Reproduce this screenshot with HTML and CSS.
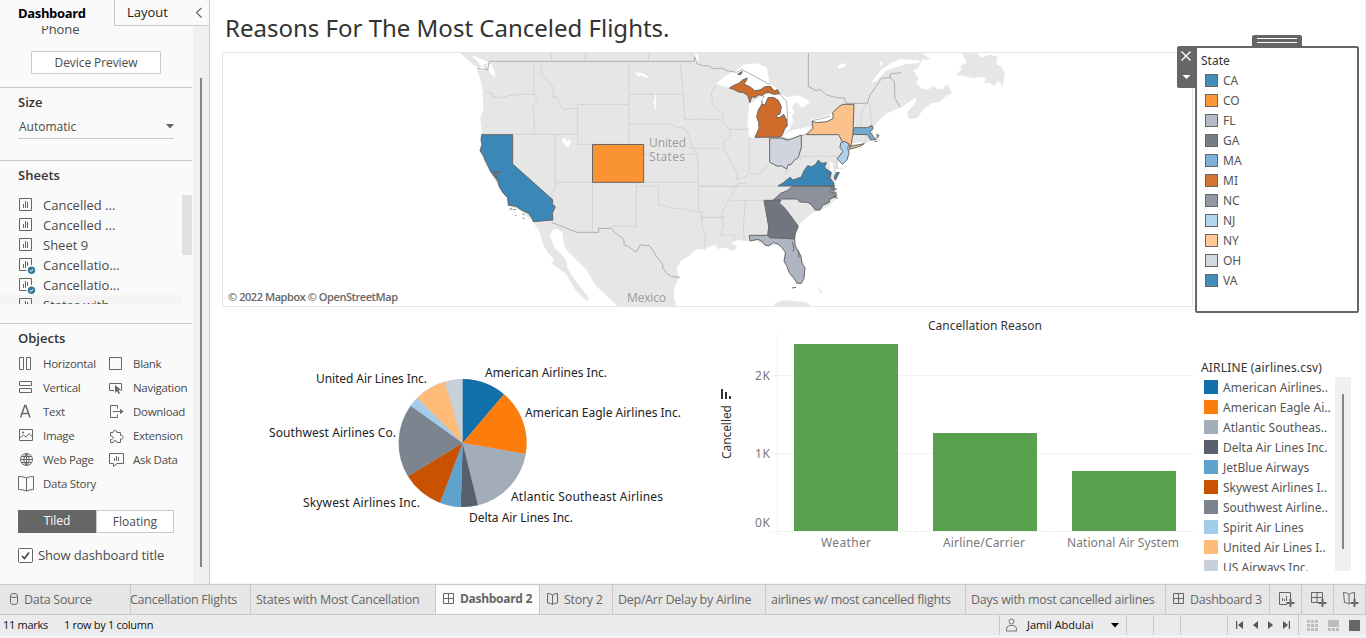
FILE: index.html
```html
<!DOCTYPE html>
<html lang="en">
<head>
<meta charset="utf-8">
<title>Reasons For The Most Canceled Flights</title>
<link rel="stylesheet" href="styles.css">
</head>
<body>
<svg width="0" height="0" class="defs">
  <symbol id="sheet" viewBox="0 0 17 17"><path d="M.5 1.5h12v12H.5z M4.500 7v4 M6.500 4v7 M8.500 5v6" fill="none" stroke="#666"/></symbol>
  <symbol id="sheetUsed" viewBox="0 0 17 17"><path d="M7.500 13.500H.5v-12h12V8 M4.500 7v4 M6.500 4v7 M8.500 5v4" fill="none" stroke="#666"/><circle cx="12.500" cy="13.300" r="3.700" fill="#357a9c"/><path d="M10.800 13.300l1.300 1.200 2-2.400" fill="none" stroke="#fff"/></symbol>
  <symbol id="dash" viewBox="0 0 12 12"><path d="M.5 .5h10v10H.5z M5.500 .5v10 M.5 5.500h10" fill="none" stroke="#666"/></symbol>
  <symbol id="book" viewBox="0 0 12 12"><path d="M.5 .5q3 0 5 1.500 2-1.500 5-1.500v9.500q-3 0-5 1.500-2-1.500-5-1.500z M5.500 2v9.500" fill="none" stroke="#666"/></symbol>
</svg>
<div class="app">
  <div class="workspace">
    <aside class="sidebar">
      <div class="panes"><div class="pane active">Dashboard</div><div class="pane">Layout<svg width="8" height="12"><path d="M6.500 1L1.500 5.500l5 5" fill="none" stroke="#666" stroke-width="1.200"/></svg></div></div>
      <div class="scroller">
        <div class="options">
          <section class="device"><div class="phone">Phone</div><button class="preview">Device Preview</button></section>
          <section class="size"><h2>Size</h2><div class="select"><span>Automatic</span><svg width="8" height="5"><path d="M0 0h8L4 4.500z" fill="#666"/></svg></div></section>
          <section class="sheets"><h2>Sheets</h2>
            <div class="sheetlist">
              <ul>
                <li><svg><use href="#sheet"/></svg>Cancelled ...</li>
                <li><svg><use href="#sheet"/></svg>Cancelled ...</li>
                <li><svg><use href="#sheet"/></svg>Sheet 9</li>
                <li><svg><use href="#sheetUsed"/></svg>Cancellatio...</li>
                <li><svg><use href="#sheetUsed"/></svg>Cancellatio...</li>
                <li class="hover"><svg><use href="#sheetUsed"/></svg>States with ...</li>
              </ul>
              <i class="listthumb"></i>
            </div>
          </section>
          <section class="objects"><h2>Objects</h2>
            <div class="objgrid">
              <span><svg><path d="M1.500 2.500h4v12h-4z M8.500 2.500h4v12h-4z"/></svg>Horizontal</span>
              <span><svg><path d="M1.500 2.500h12v12h-12z"/></svg>Blank</span>
              <span><svg><path d="M1.500 2.500h12v4h-12z M1.500 9.500h12v4h-12z"/></svg>Vertical</span>
              <span><svg><path d="M6 11.500H1.500v-7h12v7h-1"/><path d="M7 6l6 5-2.500.3 1.500 3-1.500.7-1.400-3L7 14z" class="solid"/></svg>Navigation</span>
              <span><svg><path d="M2.500 14.500L6.800 2.500h1L12 14.500 M4 10.500h7" stroke-width="1.500"/></svg>Text</span>
              <span><svg><path d="M9.500 5.500v-3h-7v12h7v-3 M5 8.500h9"/><path d="M12 5.800l3.500 2.700-3.500 2.700z" class="solid"/></svg>Download</span>
              <span><svg><path d="M1.500 2.500h13v11h-13z M1.500 11l4-3 2.500 2 3-3.500 3.500 3.500"/><circle cx="5" cy="5.500" r="1" class="solid"/></svg>Image</span>
              <span><svg><path d="M2.500 5.500h2.500a2 2 0 1 1 4 0h3.500v3a1.900 1.900 0 1 1 0 3.500v3.500H9q0-2-1.700-2t-1.700 2H2.500v-3a1.900 1.900 0 1 0 0-3.500z"/></svg>Extension</span>
              <span><svg><circle cx="8.500" cy="8.500" r="6"/><path d="M2.500 8.500h12 M8.500 2.500v12 M3.500 5.500h10 M3.500 11.500h10 M8.500 2.500q-5.500 6 0 12 M8.500 2.500q5.500 6 0 12"/></svg>Web Page</span>
              <span><svg><path d="M1.500 2.500h14v10H9l-3.500 3v-3h-4z M6.500 7v3 M8.500 5v5 M10.500 6v4"/></svg>Ask Data</span>
              <span><svg><path d="M.5 1.500q5 0 8 1.500 3-1.500 7-1.500v13q-4 0-7 1.500-3-1.500-8-1.500z M8.500 3v13"/></svg>Data Story</span>
            </div>
            <div class="toggle"><b>Tiled</b><span>Floating</span></div>
            <div class="check"><svg width="15" height="15"><rect x=".5" y=".5" width="14" height="14" rx="1" fill="#fff" stroke="#666"/><path d="M4 8l2.500 2.500L11 4.500" fill="none" stroke="#444" stroke-width="1.700"/></svg>Show dashboard title</div>
          </section>
        </div>
        <div class="gutter"><i></i></div>
      </div>
    </aside>

    <main class="canvas">
      <div class="views">
        <h1>Reasons For The Most Canceled Flights.</h1>
        <svg class="map" viewBox="222 52 971 255" width="971" height="255">
          <g transform="translate(460 50) scale(.33333)">
            <path class="land" d="M-5 8L25 5 740 0 740 600 710 596 690 615 660 635 650 655 657 683 644 710 641 735 650 775 480 775 445 742 405 705 380 660 350 630 325 605 312 585 308 550 293 536 275 540 270 557 285 595 312 620 320 635 322 655 345 690 388 745 380 753 350 725 338 705 318 672 275 640 282 630 262 607 248 580 240 550 220 515 180 480 145 465 140 440 110 400 90 365 70 330 60 300 66 250 61 205 70 175 68 125 62 90 50 57 75 62 68 45 88 38 50 20z"/>
            <path class="land" d="M-5 5L30 12 65 47 58 55 40 45z"/>
            <g fill="#fff"><path d="M80 45l14 -3 12 28 -2 12-14-14z M305 268l10-5 5 10 12-5-4 22-6 2-12-12z M522 62l12 8 14-2 20 15-8 1-18-8-8 4z M585 125l4 14-2 38-5 2 2-18-9-5 10-3z M705 12l28 8-6 20-20-7z"/></g>
          </g>
          <g transform="translate(700 50) scale(.33333)">
            <path class="land" d="M-5 0H655L692 28 665 30 655 55 640 60 655 85 650 98 662 115 682 120 700 108 712 116 730 118 735 107 745 105 756 130 735 140 720 155 695 160 670 177 655 200 640 207 628 206 622 198 625 182 645 160 650 140 605 172 560 190 530 218 517 240 524 262 538 258 538 273 520 270 490 282 450 296 447 315 425 345 408 358 410 385 401 395 415 440 385 468 357 483 340 486 298 522 290 545 287 590 315 650 312 680 300 700 270 680 253 635 252 600 235 585 198 588 170 572 145 574 110 570 92 580 112 590 100 603 75 592 55 597 45 585 20 593-15 598z"/>
            <path class="land" d="M785 10H832L845 22 870 14 893 20 888 42 903 50 915 70 912 88 908 110 895 92 880 108 870 98 852 100 858 84 838 80 820 85 802 80 768 75 785 58 780 50 800 37z M222 763l20-10 15-3 40 5 25 3 12 12H222z M350 664l10 2 M354 705l14 27-8-4z M600 100l30 9-10 5-25-7z"/>
            <g fill="#fff">
              <path d="M48 102L75 78 108 62 128 44 170 40 200 52 209 101 235 116 234 131 170 123 151 130 128 116 140 90 110 99 89 114z"/>
              <path d="M148 160L165 151 200 132 236 130 262 142 292 136 315 145 330 157 306 173 291 155 276 168 282 185 276 200 280 212 268 239 240 262 235 205 205 154 175 195 177 235 165 263 148 262 142 225z"/>
              <path d="M240 262L278 240 335 229 315 252 272 270 246 271z M334 208L365 202 398 190 396 205 380 215 345 218z"/>
              <path d="M512 100L545 58 575 38 600 28 657 30 660 39 620 42 560 60 530 92z M430 325l5 2-8 21-2 30-7-12-5-26 5-18z M388 335l10 5 3 35-10-8z M448 283l35-8 8 7z M415 47l12-7 13 2-8 10-16 4z M540 35l10 4-9 12z"/>
            </g>
          </g>
          <g class="borders" transform="translate(460 50) scale(.33333)">
            <path class="national" d="M52 55L83 60 88 34H703L704 20 712 42 730 48 745 47 760 56 785 54 800 62 830 67 M275 517L350 547H416V535H454L465 548 491 566 493 585 510 592 528 606 533 600 540 585 568 587 578 600 590 620 607 641 609 655 620 670 635 680 660 682"/>
            <path d="M222 35V130 M74 126L95 130 97 142 108 140 124 144 150 136 183 133H225 M225 133L232 148 217 175 223 200V253 M64 253H353 M353 163V283H397 M353 163H507V283H397 M244 35V72L262 92 283 112 277 142 290 140 300 165 312 180 325 175 352 177 M507 35V163 M507 133H670 M660 35L665 80 670 134 674 208 M507 222H630L645 230 675 235 684 250 694 280 M286 253V397 M286 420H276V447 M286 397V420 M286 397H715V398 M397 398V548 M552 313H566 M680 313H705 M715 335V470L720 486 M529 397V529H454 M529 409H595V463L610 466 640 476 665 474 690 482 726 486 M715 409H830 M674 208H780 M688 295H783 M726 486V530L738 555 733 588 M726 502H793 M694 280L710 312 714 340 M275 8V34 M376 8V34 M565 8V34"/>
          </g>
          <g class="borders" transform="translate(700 50) scale(.33333)">
            <path class="national" d="M112 67L125 58 210 104 M237 130L260 155 263 205 254 244 M246 262L272 270 330 248 M336 212L365 206 390 198 M325 8V110L350 122 360 118 380 135 410 143 433 144 439 160H502 M502 160L510 135 545 85 570 82 583 95 585 145 600 170 M568 86L572 71 605 68"/>
            <path d="M45 108L34 130 38 165 70 190 65 210 92 245 88 262 70 275 73 298 100 350 112 370 110 390 130 383 148 370 165 373 187 365 200 345 208 340 M82 238H148 M148 262V365 M-5 409H235 M140 400L112 400 98 430 65 490 72 530 60 555H103V575 M92 451H192 M136 451L130 530 132 570 M0 502H73 M302 319H412 M302 319L300 335 M262 355L255 375 M483 230L480 200 500 160 M510 160L515 225 M410 319V355H428 M497 255V278"/>
          </g>
          <g class="states" transform="translate(460 50) scale(.33333)">
            <path fill="#3b88b8" d="M65 254H158V342L278 449 277 462 286 470 277 490 279 510 220 515 215 503 205 490 182 479 168 469 145 466 143 443 130 430 118 411 114 395 105 382 92 365 80 340 75 330 71 318 60 302 66 284 63 270z"/>
            <path d="M94 365l29 1-16 4 8 14-10-7-3-10" fill="none"/><path d="M149 477h8M160 479h7M188 492l5 2M166 496h3M188 503l5 4"/>
            <path fill="#fa9334" d="M397.500 283.500H551V397H397.500z"/>
          </g>
          <g class="states" transform="translate(700 50) scale(.33333)">
            <path fill="#cf6c2c" d="M88 114L102 106 115 101 128 90 142 84 136 97 131 101 140 106 151 111 164 122 180 120 195 110 212 109 218 118 225 123 232 118 239 131 220 133 207 127 195 129 188 136 175 135 165 143 155 140 150 158 143 136 130 128 116 126 100 118z M113 73l14-9-4 9z M165 262L177 235 176 217 170 201 175 180 186 162 195 165 204 143 220 142 235 151 244 170 240 192 230 195 231 203 240 202 251 193 260 210 262 228 253 236 248 252 242 261z"/>
            <path d="M193 139l-5 4M186 151v10"/>
            <path fill="#cfd4df" d="M209 264H242L262 270 280 265 304 255V292L295 322 282 332 272 345 265 343 260 357 245 348 230 348 209 336z"/>
            <path fill="#3786b6" d="M234 408L250 398 270 382 279 390 304 381 312 362 323 347 335 350 348 342 355 330 365 340 379 338 374 350 378 357 394 367 390 385 402 399V408z M403 381l6-13 9-1-12 24z"/>
            <path fill="#8c919c" d="M219 451L242 430 262 422 278 409H403L400 420 388 425 404 429 409 438 389 448 388 457 368 466 360 480 346 480 335 465 323 457 299 456 292 447 244 447z"/>
            <path fill="#70757f" d="M192 451H243L238 459 255 475 268 492 285 515 295 529 286 550 283 567 209 563 203 555 206 530z"/>
            <path fill="#b0b5c3" d="M148 556H204L209 563 283 567 286 588 303 619 306 640 315 654 312 685 304 700H291L281 683 268 668 260 647 252 633 257 608 245 592 235 583 220 577 206 588 195 585 187 575 174 568 150 573z"/>
            <path fill="#73acd3" d="M463 233H503L510 229 516 227 519 236 510 245 519 259 528 268 512 270 503 254 458 253z M532 274h-9M529 253l8 3-6 8"/>
            <path fill="#fbc28c" d="M320 254L339 235 336 214 350 218 381 215 400 205 398 188 416 170 429 163H462L459 252 452 292 443 281 428 278 416 254z M448 290L493 281 480 289 449 298z"/>
            <path fill="#aed2eb" d="M422 279L432 274 448 282 443 292 447 309 441 330 427 343 412 326 429 304 420 293z"/>
            <path d="M390 414l19 3-12 5 13 8-9 10 12 5M276 714l12-2M277 576l5 20-3 8M296 601v22M390 376l-10-8M396 390l-16-6" fill="none"/>
          </g>
          <g class="maplabel"><text x="649" y="147" textLength="37">United</text><text x="649" y="161" textLength="36">States</text><text x="627" y="302" textLength="39">Mexico</text></g>
          <text class="credit" x="228" y="301" textLength="170">© 2022 Mapbox © OpenStreetMap</text>
          <path d="M222 52.500H1192.500V306.500H222.500V52" fill="none" stroke="#e4e4e4"/>
        </svg>

        <div class="charts">
          <svg class="pie" viewBox="222 307 478 277" width="478" height="277">
            <g transform="translate(260 360) scale(.33333)">
              <circle cx="608" cy="249" r="192" fill="#c8d0d9"/>
              <path fill="#1170aa" d="M608 249V57A192 192 0 0 1 732 103z"/>
              <path fill="#fc7d0b" d="M608 249L732 103A192 192 0 0 1 797 282z"/>
              <path fill="#a3acb9" d="M608 249L797 282A192 192 0 0 1 654 436z"/>
              <path fill="#57606c" d="M608 249L654 436A192 192 0 0 1 602 441z"/>
              <path fill="#5fa2ce" d="M608 249L602 441A192 192 0 0 1 540 428z"/>
              <path fill="#c85200" d="M608 249L540 428A192 192 0 0 1 444 349z"/>
              <path fill="#7b848f" d="M608 249L444 349A192 192 0 0 1 452 137z"/>
              <path fill="#a3cce9" d="M608 249L452 137A192 192 0 0 1 471 114z"/>
              <path fill="#ffbc79" d="M608 249L471 114A192 192 0 0 1 554 65z"/>
            </g>
            <g class="label">
              <text x="485" y="377" textLength="122">American Airlines Inc.</text>
              <text x="525" y="417" textLength="156">American Eagle Airlines Inc.</text>
              <text x="511" y="501" textLength="152">Atlantic Southeast Airlines</text>
              <text x="469" y="522" textLength="104">Delta Air Lines Inc.</text>
              <text x="303" y="507" textLength="117">Skywest Airlines Inc.</text>
              <text x="269" y="437" textLength="127">Southwest Airlines Co.</text>
              <text x="316" y="383" textLength="111">United Air Lines Inc.</text>
            </g>
          </svg>
          <svg class="bars" viewBox="700 307 493 277" width="493" height="277">
            <path d="M772 375.500H1193M772 453.500H1193M772 531.500H1193M777.500 335V535M915.500 531v4M1054.500 531v4" fill="none" stroke="#f2f2f2"/>
            <g fill="#59a14f"><path d="M794 344h104v187H794zM933 433h104v98H933zM1072 471h104v60H1072z"/></g>
            <text class="charttitle" x="928" y="330" textLength="114">Cancellation Reason</text>
            <g class="axis">
              <text x="755" y="380" textLength="15">2K</text><text x="755" y="458" textLength="15">1K</text><text x="755" y="527" textLength="15">0K</text>
              <text x="821" y="547" textLength="50">Weather</text><text x="943" y="547" textLength="82">Airline/Carrier</text><text x="1067" y="547" textLength="112">National Air System</text>
            </g>
            <text class="charttitle" transform="translate(731 459) rotate(-90)" textLength="54">Cancelled</text>
            <path d="M721 389h2v10h-2zM725 392h2v7h-2zM729 396h2v3h-2z" fill="#333"/>
          </svg>
        </div>
      </div>

      <div class="legends">
        <div class="statelegend">
          <svg class="handle" width="50" height="12"><path d="M0 12V2Q0 0 2 0H48Q50 0 50 2V12z" fill="#666"/><path d="M5 3.500h40M5 7.500h40" stroke="#fff"/></svg>
          <svg class="closer" width="19" height="42"><path d="M19 0H2Q0 0 0 2V40Q0 42 2 42H19z" fill="#666"/><path d="M4.500 5.500l9 9M13.500 5.500l-9 9" stroke="#fff" stroke-width="1.400"/><path d="M5.500 29h8l-4 4z" fill="#fff"/></svg>
          <h3>State</h3>
          <ul>
            <li><i class="ca"></i>CA</li><li><i class="co"></i>CO</li><li><i class="fl"></i>FL</li><li><i class="ga"></i>GA</li><li><i class="ma"></i>MA</li><li><i class="mi"></i>MI</li><li><i class="nc"></i>NC</li><li><i class="nj"></i>NJ</li><li><i class="ny"></i>NY</li><li><i class="oh"></i>OH</li><li><i class="ca"></i>VA</li>
          </ul>
        </div>
        <div class="airlegend">
          <h3>AIRLINE (airlines.csv)</h3>
          <div class="airbody">
            <ul>
              <li><i class="a1"></i>American Airlines..</li><li><i class="a2"></i>American Eagle Ai..</li><li><i class="a3"></i>Atlantic Southeas..</li><li><i class="a4"></i>Delta Air Lines Inc.</li><li><i class="a5"></i>JetBlue Airways</li><li><i class="a6"></i>Skywest Airlines I..</li><li><i class="a7"></i>Southwest Airline..</li><li><i class="a8"></i>Spirit Air Lines</li><li><i class="a9"></i>United Air Lines I..</li><li><i class="a10"></i>US Airways Inc.</li>
            </ul>
            <div class="airscroll"><i></i></div>
          </div>
        </div>
      </div>
    </main>
  </div>

  <nav class="tabs">
    <div class="tab source"><svg width="9" height="12"><path d="M.5 2.500q0-2 3.500-2t3.500 2v7q0 2-3.500 2t-3.500-2z M.5 3q0 1.500 3.500 1.500t3.500-1.500" fill="none" stroke="#666"/></svg>Data Source</div>
    <div class="tab cf">Cancellation Flights</div>
    <div class="tab smc">States with Most Cancellation</div>
    <div class="tab current"><svg width="12" height="12"><use href="#dash"/></svg>Dashboard 2</div>
    <div class="tab story"><svg width="12" height="12"><use href="#book"/></svg>Story 2</div>
    <div class="tab delay">Dep/Arr Delay by Airline</div>
    <div class="tab flights">airlines w/ most cancelled flights</div>
    <div class="tab days">Days with most cancelled airlines</div>
    <div class="tab d3"><svg width="12" height="12"><use href="#dash"/></svg>Dashboard 3</div>
    <div class="tab new"><svg width="16" height="16"><path d="M8 12.500H.5V.5h11V7M3.500 6v3M5.500 7v2M7.500 4v5" fill="none" stroke="#666"/><path d="M11.500 7v8M7.500 11h8" stroke="#666" stroke-width="2"/></svg></div>
    <div class="tab new"><svg width="16" height="16"><path d="M8 10.500H.5V.5h11V7M6 .5v10M.5 5.500h11" fill="none" stroke="#666"/><path d="M11.500 7v8M7.500 11h8" stroke="#666" stroke-width="2"/></svg></div>
    <div class="tab new"><svg width="16" height="16"><path d="M7 11.500L5.500 12Q4 10.500 1.500 10.500L.5 .5Q4 .5 6 2.500 8 .5 11.500.5V7M6 2.500V12" fill="none" stroke="#666"/><path d="M11.500 7v8M7.500 11h8" stroke="#666" stroke-width="2"/></svg></div>
  </nav>

  <footer class="status">
    <div class="info"><span class="marks">11 marks</span><span class="rows">1 row by 1 column</span></div>
    <div class="user"><svg width="11" height="14"><circle cx="5.500" cy="3.500" r="2.500"/><path d="M.5 13V11q0-3.500 3.500-3.500h3q3.500 0 3.500 3.500v2z"/></svg><span>Jamil Abdulai</span><svg width="8" height="5"><path d="M0 0h8L4 4.500z" class="black"/></svg></div>
    <div class="c26"></div><div class="c27"></div><div class="c47"></div>
    <div class="pager"><svg width="7" height="8"><path d="M0 0h1.200v8H0zM7 0v8L2 4z"/></svg><svg width="5" height="8"><path d="M5 0v8L0 4z"/></svg><svg width="5" height="8"><path d="M0 0v8l5-4z"/></svg><svg width="7" height="8"><path d="M5.800 0H7v8H5.800zM0 0v8l5-4z"/></svg></div>
    <div class="modes"><svg width="11" height="11"><path d="M0 0h3v3H0zM4 0h3v3H4zM8 0h3v3H8zM0 4h3v3H0zM4 4h3v3H4zM8 4h3v3H8zM0 8h3v3H0zM4 8h3v3H4zM8 8h3v3H8z"/></svg><svg width="11" height="11"><path d="M0 0h11v7H0zM0 8h3v3H0zM4 8h3v3H4zM8 8h3v3H8z"/></svg><svg width="11" height="11"><path d="M0 0h11v11H0z" class="on"/></svg></div>
  </footer>
</div>
</body>
</html>
```
FILE: styles.css
```css
* { box-sizing: border-box; }
body { margin: 0; background: #fff; font-family: "Open Sans", "Noto Sans", sans-serif; font-size: 12px; color: #4a4a4a; overflow: hidden; }
h1, h2, h3, ul { margin: 0; padding: 0; font-weight: 400; list-style: none; }
svg { display: block; flex: none; }
.defs { position: absolute; }
.app { width: 1366px; height: 638px; display: flex; flex-direction: column; }
.workspace { height: 584px; display: flex; }

.sidebar { width: 210px; background: #fafafa; border-right: 1px solid #c9c9c9; flex: none; }
.panes { display: flex; height: 26px; font-size: 13px; line-height: 25px; color: #222; }
.pane { flex: 1; display: flex; align-items: center; justify-content: space-between; padding: 0 6px 0 12px; border-left: 1px solid #c9c9c9; border-bottom: 1px solid #c9c9c9; }
.pane.active { flex: 0 0 114px; border: 0; padding-left: 18px; font-size: 13px; font-weight: 700; color: #000; letter-spacing: -.35px; }
.scroller { display: flex; height: 558px; }
.options { width: 193px; }
.gutter { width: 16px; background: #f0f0f0; padding: 52px 0 0 7px; }
.gutter i { display: block; width: 2px; height: 489px; background: #858585; }
.options section { width: 192px; border-bottom: 1px solid #c9c9c9; padding-left: 18px; }
.options h2 { font-size: 13px; font-weight: 600; line-height: 20px; color: #333; }
.options .device { height: 62px; padding-left: 31px; overflow: hidden; }
.phone { height: 25px; line-height: 18px; margin-top: -6px; padding: 0 0 0 10px; font-size: 13px; letter-spacing: -.1px; }
.preview { display: block; margin-top: 6px; width: 130px; height: 23px; border: 1px solid #c9c9c9; border-radius: 1px; background: #fff; font: inherit; color: #4a4a4a; padding: 0; letter-spacing: -.08px; }
.options .size { height: 73px; padding-top: 4px; }
.select { display: flex; width: 156px; height: 23px; margin-top: 4px; padding: 0 0 1px 1px; align-items: center; justify-content: space-between; border-bottom: 1px solid #c9c9c9; }
.options .sheets { height: 163px; padding: 4px 0 0; }
.sheets h2 { padding-left: 18px; }
.sheetlist { display: flex; height: 109px; margin-top: 10px; overflow: hidden; font-size: 13px; }
.sheetlist ul { width: 182px; }
.sheetlist li { display: flex; align-items: center; height: 20px; padding-left: 19px; gap: 7px; }
.sheetlist li svg { width: 17px; height: 17px; }
.sheetlist .hover { background: #f4f4f4; }
.listthumb { width: 10px; height: 60px; background: #e0e0e0; }
.options .objects { border: 0; padding-top: 4px; }
.objgrid { display: grid; grid-template-columns: 90px 84px; grid-auto-rows: 24px; margin-top: 3px; font-size: 11.500px; letter-spacing: -.3px; }
.objgrid span { display: flex; align-items: center; gap: 7px; white-space: nowrap; }
.objgrid svg { width: 18px; height: 17px; fill: none; stroke: #666; }
.objgrid .solid { fill: #666; stroke: none; }
.toggle { display: flex; width: 156px; height: 23px; margin-top: 15px; line-height: 22px; text-align: center; }
.toggle b { width: 78px; background: #666; color: #fff; font-weight: 400; }
.toggle span { width: 78px; background: #fff; border: 1px solid #c9c9c9; }
.check { display: flex; align-items: center; gap: 5px; height: 20px; margin-top: 12px; font-size: 13px; letter-spacing: -.12px; }

.canvas { flex: 1; display: flex; padding-left: 12px; border-bottom: 1px solid #f5f5f5; }
.views { width: 973px; flex: none; }
h1 { height: 52px; line-height: 56px; padding-left: 3px; font-family: "Noto Sans", sans-serif; font-size: 24px; color: #333; white-space: nowrap; }
.land { fill: #e6e6e6; }
.borders path { fill: none; stroke: #c8c8c8; stroke-width: 1.800; }
.borders .national { stroke: #a6a6a6; stroke-width: 2.600; }
.states path { stroke: #666; stroke-width: 3; stroke-linejoin: round; }
.maplabel { font: 12px "Open Sans", sans-serif; fill: #999; stroke: #e9e9e9; stroke-width: 2px; paint-order: stroke; }
.credit { font: 600 11px "Open Sans", sans-serif; fill: #666; }
.charts { display: flex; }
.label { font: 12px "Noto Sans", sans-serif; fill: #222; }
.charttitle { font: 12px "Noto Sans", sans-serif; fill: #333; }
.axis { font: 12px "Noto Sans", sans-serif; fill: #787878; }

.legends { width: 171px; padding-top: 46px; font-family: "Noto Sans", sans-serif; border-right: 1px solid #f0f0f0; }
.legends h3 { font-size: 12px; color: #333; line-height: 19px; white-space: nowrap; }
.legends li { display: flex; align-items: center; height: 20px; color: #555; white-space: nowrap; }
.statelegend { position: relative; width: 164px; height: 267px; border: 2px solid #666; border-radius: 2px; padding: 3px 0 0 4px; }
.handle { position: absolute; left: 55px; top: -13px; }
.closer { position: absolute; left: -20px; top: -2px; }
.statelegend li { gap: 5px; padding-left: 4px; }
.statelegend i { width: 13px; height: 13px; border: 1px solid #666; }
.airlegend { padding: 45px 0 0 6px; }
.airlegend h3 { letter-spacing: .17px; }
.airbody { display: flex; height: 194px; overflow: hidden; justify-content: space-between; width: 150px; }
.airbody li { gap: 5px; padding-left: 3px; }
.airbody li i { width: 14px; height: 14px; }
.airscroll { width: 16px; background: #f0f0f0; padding: 17px 0 0 7px; flex: none; }
.airscroll i { display: block; width: 2px; height: 155px; background: #858585; }
.ca { background: #418cbb; } .co { background: #fd9739; } .fl { background: #b5bac8; } .ga { background: #777d87; }
.ma { background: #7db2d8; } .mi { background: #d37432; } .nc { background: #9399a3; } .nj { background: #b4d5ee; }
.ny { background: #ffc993; } .oh { background: #d2d8e1; }
.a1 { background: #1170aa; } .a2 { background: #fc7d0b; } .a3 { background: #a3acb9; } .a4 { background: #57606c; }
.a5 { background: #5fa2ce; } .a6 { background: #c85200; } .a7 { background: #7b848f; } .a8 { background: #a3cce9; }
.a9 { background: #ffbc79; } .a10 { background: #c8d0d9; }

.tabs { display: flex; height: 31px; background: #e6e6e6; border-top: 1px solid #c9c9c9; border-bottom: 1px solid #c9c9c9; font-size: 12.500px; letter-spacing: -.27px; color: #666; }
.tab { display: flex; align-items: center; gap: 5px; padding-left: 5px; border-right: 1px solid #c9c9c9; white-space: nowrap; }
.tab svg { margin-top: -2px; }
.source { width: 131px; padding-left: 10px; }
.cf { width: 120px; padding-left: 0; text-indent: -1px; }
.smc { width: 185px; }
.current { width: 104px; padding: 0 0 2px 7px; background: #fafafa; font-weight: 700; font-size: 12px; letter-spacing: -.3px; }
.current svg { margin-top: 0; }
.story { width: 73px; padding-left: 7px; }
.delay { width: 153px; }
.flights { width: 200px; }
.days { width: 200px; }
.d3 { width: 104px; padding-left: 7px; }
.new { width: 32px; padding-left: 9px; }
.new svg { margin-top: 1px; }

.status { display: flex; height: 23px; background: #ebebeb; border-bottom: 3px solid #f2f2f2; font-size: 11px; color: #111; line-height: 20px; }
.status > div { border-right: 1px solid #c9c9c9; }
.info { width: 1000px; display: flex; padding-left: 3px; letter-spacing: -.3px; }
.marks { width: 61px; }
.user { width: 127px; display: flex; align-items: center; padding-left: 6px; }
.user svg { fill: none; stroke: #777; }
.user span { width: 84px; margin-left: 10px; }
.user .black { fill: #000; stroke: none; }
.c26 { width: 27px; } .c27 { width: 27px; } .c47 { width: 47px; }
.pager { width: 71px; display: flex; align-items: center; justify-content: space-between; padding: 0 8px; fill: #555; }
.status .modes { border: 0; display: flex; align-items: center; gap: 10px; padding-left: 8px; fill: #bdbdbd; }
.modes .on { fill: #666; }
```
